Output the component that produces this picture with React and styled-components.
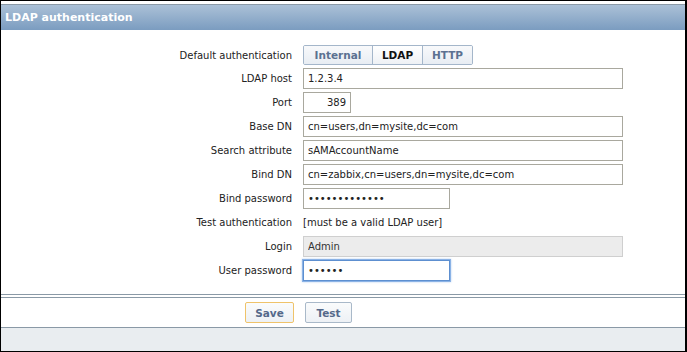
import { Fragment } from "react";
import styled, { createGlobalStyle, css } from "styled-components";

const GlobalStyle = createGlobalStyle`
  html, body {
    margin: 0;
    padding: 0;
    background: #ffffff;
  }
  * {
    box-sizing: border-box;
  }
`;

const Frame = styled.div`
  width: 687px;
  height: 352px;
  border-top: 1px solid #000;
  border-left: 1px solid #000;
  border-right: 2px solid #000;
  border-bottom: 1px solid #000;
  font-family: "DejaVu Sans", Verdana, sans-serif;
  font-size: 10px;
  color: #222;
  display: flex;
  flex-direction: column;
  overflow: hidden;
`;

const TopRule = styled.div`
  height: 4px;
  border-top: 3px solid #fff;
  border-bottom: 1px solid #8b9aa7;
`;

const Header = styled.div`
  height: 25px;
  padding-left: 4px;
  display: flex;
  align-items: center;
  background: linear-gradient(#abc1d7, #7b9cc0);
  color: #fff;
  font-weight: bold;
  font-size: 11px;
`;

const Form = styled.div`
  display: grid;
  grid-template-columns: 291px 1fr;
  column-gap: 11px;
  row-gap: 3px;
  padding-top: 15px;
  align-items: center;
  height: 264px;
  align-content: start;
`;

const Label = styled.div`
  text-align: right;
  color: #222;
`;

const Field = styled.div`
  display: flex;
  align-items: center;
  min-height: ${(p) => p.$h || 21}px;
`;

const Input = styled.input`
  font-family: "DejaVu Sans", Verdana, sans-serif;
  font-size: 10px;
  color: #222;
  height: 21px;
  width: ${(p) => p.$w}px;
  padding: 0 4px;
  margin: 0;
  border: 1px solid #a9a89e;
  background: #fff;
  outline: none;
  text-align: ${(p) => (p.$right ? "right" : "left")};
  ${(p) =>
    p.disabled &&
    css`
      background: #ececec;
      border-color: #cfcfcf;
      color: #333;
    `}
  ${(p) =>
    p.$focus &&
    css`
      border: 1px solid #5d8fd0;
      box-shadow: 0 0 0 1px #8bb3e6, 0 0 2px 1px #b3cdef;
    `}
`;

const Segmented = styled.div`
  display: flex;
  height: 20px;
  border: 1px solid #a4b6ca;
  border-radius: 2px;
  overflow: hidden;
`;

const SegButton = styled.button`
  font-family: "DejaVu Sans", Verdana, sans-serif;
  font-size: 10.5px;
  font-weight: bold;
  margin: 0;
  padding: 0;
  width: ${(p) => p.$w}px;
  border: none;
  border-left: ${(p) => (p.$first ? "none" : "1px solid #a4b6ca")};
  background: ${(p) =>
    p.$active ? "linear-gradient(#ffffff, #eef1f5)" : "linear-gradient(#f8f9fb, #e8edf3)"};
  color: ${(p) => (p.$active ? "#111" : "#5b7191")};
`;

const Hint = styled.span`
  color: #222;
`;

const FooterRule = styled.div`
  height: 4px;
  border-top: 1px solid #8a99a6;
  border-bottom: 1px solid #8a99a6;
`;

const Actions = styled.div`
  display: flex;
  align-items: center;
  gap: 11px;
  padding-left: 244px;
  height: 30px;
  border-bottom: 1px solid #8a99a6;
`;

const Button = styled.button`
  font-family: "DejaVu Sans", Verdana, sans-serif;
  font-size: 10.5px;
  font-weight: bold;
  height: 21px;
  width: ${(p) => p.$w}px;
  padding: 0;
  border: 1px solid ${(p) => (p.$primary ? "#efc36a" : "#a9b9c9")};
  border-radius: 2px;
  background: linear-gradient(#fafbfc, #edf1f5);
  color: #54698a;
`;

const StatusBar = styled.div`
  flex: 1;
  background: #e9edf0;
`;

const rows = [
  { label: "LDAP host", value: "1.2.3.4", w: 320 },
  { label: "Port", value: "389", w: 48, right: true },
  { label: "Base DN", value: "cn=users,dn=mysite,dc=com", w: 320 },
  { label: "Search attribute", value: "sAMAccountName", w: 320 },
  { label: "Bind DN", value: "cn=zabbix,cn=users,dn=mysite,dc=com", w: 320 },
  { label: "Bind password", value: "zabbixsecret1", w: 147, type: "password" },
];

export default function App() {
  return (
    <>
      <GlobalStyle />
      <Frame>
        <TopRule />
        <Header>LDAP authentication</Header>
        <Form>
          <Label>Default authentication</Label>
          <Field $h={20}>
            <Segmented>
              <SegButton $first $w={68}>Internal</SegButton>
              <SegButton $active $w={50}>LDAP</SegButton>
              <SegButton $w={50}>HTTP</SegButton>
            </Segmented>
          </Field>
          {rows.map((r) => (
            <Fragment key={r.label}>
              <Label>{r.label}</Label>
              <Field>
                <Input
                  type={r.type || "text"}
                  defaultValue={r.value}
                  $w={r.w}
                  $right={r.right}
                />
              </Field>
            </Fragment>
          ))}
          <Label>Test authentication</Label>
          <Field>
            <Hint>[must be a valid LDAP user]</Hint>
          </Field>
          <Label>Login</Label>
          <Field>
            <Input defaultValue="Admin" disabled $w={320} />
          </Field>
          <Label>User password</Label>
          <Field>
            <Input type="password" defaultValue="zabbix" $w={147} $focus />
          </Field>
        </Form>
        <FooterRule />
        <Actions>
          <Button $primary $w={49}>Save</Button>
          <Button $w={47}>Test</Button>
        </Actions>
        <StatusBar />
      </Frame>
    </>
  );
}
